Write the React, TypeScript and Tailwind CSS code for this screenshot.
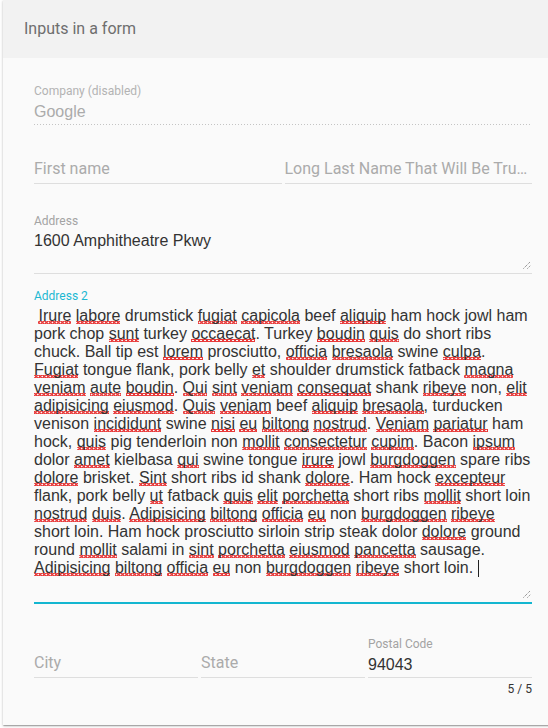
import React from "react";

const roboto = "font-[Roboto,sans-serif]";
const arial = "font-['Liberation_Sans',Arial,sans-serif]";

const lines: string[] = [
  " {Irure} {labore} drumstick {fugiat} {capicola} beef {aliquip} ham hock jowl ham",
  "pork chop {sunt} turkey {occaecat}. Turkey {boudin} {quis} do short ribs",
  "chuck. Ball tip est {lorem} prosciutto, {officia} {bresaola} swine {culpa}.",
  "{Fugiat} tongue flank, pork belly {et} shoulder drumstick fatback {magna}",
  "{veniam} {aute} {boudin}. {Qui} {sint} {veniam} {consequat} shank {ribeye} non, {elit}",
  "{adipisicing} {eiusmod}. {Quis} {veniam} beef {aliquip} {bresaola}, turducken",
  "venison {incididunt} swine {nisi} {eu} {biltong} {nostrud}. {Veniam} {pariatur} ham",
  "hock, {quis} pig tenderloin non {mollit} {consectetur} {cupim}. Bacon {ipsum}",
  "dolor {amet} kielbasa {qui} swine tongue {irure} jowl {burgdoggen} spare ribs",
  "{dolore} brisket. {Sint} short ribs id shank {dolore}. Ham hock {excepteur}",
  "flank, pork belly {ut} fatback {quis} {elit} {porchetta} short ribs {mollit} short loin",
  "{nostrud} {duis}. {Adipisicing} {biltong} {officia} {eu} non {burgdoggen} {ribeye}",
  "short loin. Ham hock prosciutto sirloin strip steak dolor {dolore} ground",
  "round {mollit} salami in {sint} {porchetta} {eiusmod} {pancetta} sausage.",
  "{Adipisicing} {biltong} {officia} {eu} non {burgdoggen} {ribeye} short loin.",
];

function Line({ text, last }: { text: string; last: boolean }) {
  const parts = text.split(/(\{[^}]+\})/).filter((p) => p.length > 0);
  return (
    <div className="h-[18px] leading-[18px] whitespace-pre">
      {parts.map((p, i) =>
        p.startsWith("{") ? (
          <span
            key={i}
            className="bg-[linear-gradient(45deg,transparent_30%,#e83a3a_30%,#e83a3a_62%,transparent_62%),linear-gradient(-45deg,transparent_30%,#e83a3a_30%,#e83a3a_62%,transparent_62%)] bg-[length:4px_3px] bg-repeat-x bg-bottom"
          >
            {p.slice(1, -1)}
          </span>
        ) : (
          <span key={i}>{p}</span>
        )
      )}
      {last && (
        <>
          <span> </span>
          <span className="inline-block w-px h-[17px] bg-[#222] align-[-4px]" />
        </>
      )}
    </div>
  );
}

function Grip() {
  return (
    <svg
      className="absolute right-[1px] bottom-[4px]"
      width="8"
      height="8"
      viewBox="0 0 8 8"
    >
      <path d="M0.5 7.5 L7.5 0.5 M4.5 7.5 L7.5 4.5" stroke="#6b6b6b" strokeWidth="1" strokeDasharray="1 1" />
    </svg>
  );
}

function Field({
  label,
  placeholder,
  value,
  disabled,
}: {
  label?: string;
  placeholder?: string;
  value?: string;
  disabled?: boolean;
}) {
  return (
    <div className="min-w-0">
      <div className={`h-[14px] leading-[14px] text-[12px] ${roboto} ${disabled ? "text-[#b3b3b3]" : "text-[#a3a3a3]"}`}>
        {label ?? ""}
      </div>
      {value !== undefined ? (
        <div className={`h-[26px] leading-[27px] text-[16px] ${arial} ${disabled ? "text-[#ababab]" : "text-[#333]"}`}>
          {value}
        </div>
      ) : (
        <div className={`h-[26px] leading-[24px] text-[16px] ${roboto} text-[#ababab] truncate`}>
          {placeholder}
        </div>
      )}
      {disabled ? (
        <div className="h-px bg-[linear-gradient(to_right,#c4c4c4_0%,#c4c4c4_34%,transparent_34%)] bg-[length:3px_1px]" />
      ) : (
        <div className="h-px bg-[#dedede]" />
      )}
    </div>
  );
}

export default function App() {
  return (
    <div className="w-[548px] h-[728px] overflow-hidden bg-white">
      <div className="ml-[3px] w-[560px] h-[725px] bg-[#fafafa] shadow-[0_1px_3px_0_rgba(0,0,0,0.2),0_1px_1px_0_rgba(0,0,0,0.14),0_2px_1px_-1px_rgba(0,0,0,0.12)]">
        <div className={`h-[58px] bg-[#f2f2f2] pl-[21px] flex items-center text-[16px] text-[#6e6e6e] ${roboto}`}>
          Inputs in a form
        </div>
        <div className="w-[529px] pl-[31px] pt-[26px]">
          <Field label="Company (disabled)" value="Google" disabled />

          <div className="mt-[18px] grid grid-cols-2 gap-[3px]">
            <Field placeholder="First name" />
            <Field placeholder="Long Last Name That Will Be Truncated" />
          </div>

          <div className="mt-[30px]">
            <div className={`h-[14px] leading-[14px] text-[12px] ${roboto} text-[#a3a3a3]`}>Address</div>
            <div className={`relative h-[45px] pt-[4px] text-[16px] ${arial} text-[#333]`}>
              <div className="h-[18px] leading-[18px]">1600 Amphitheatre Pkwy</div>
              <Grip />
            </div>
            <div className="h-px bg-[#dedede]" />
          </div>

          <div className="mt-[15px]">
            <div className={`h-[14px] leading-[14px] text-[12px] ${roboto} text-[#1cb8d2]`}>Address 2</div>
            <div className={`relative h-[299px] pt-[4px] text-[16px] ${arial} text-[#333]`}>
              {lines.map((l, i) => (
                <Line key={i} text={l} last={i === lines.length - 1} />
              ))}
              <Grip />
            </div>
            <div className="h-[2px] bg-[#13b6d0]" />
          </div>

          <div className="mt-[33px] grid grid-cols-3 gap-[3px]">
            <Field placeholder="City" />
            <Field placeholder="State" />
            <Field label="Postal Code" value="94043" />
          </div>

          <div className={`mt-[4px] h-[14px] leading-[14px] text-right text-[12px] ${roboto} text-[#333]`}>5 / 5</div>
        </div>
      </div>
    </div>
  );
}
